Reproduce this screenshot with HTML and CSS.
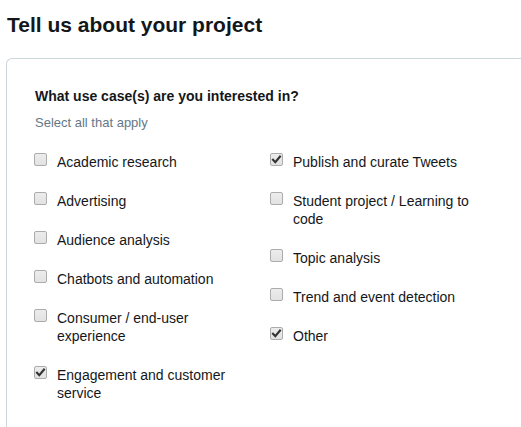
FILE: index.html
```html
<!DOCTYPE html>
<html lang="en">
<head>
<meta charset="utf-8">
<title>Tell us about your project</title>
<link rel="stylesheet" href="styles.css">
</head>
<body>
<div class="page">
  <h1 class="title">Tell us about your project</h1>
  <section class="card">
    <h2 class="question">What use case(s) are you interested in?</h2>
    <p class="hint">Select all that apply</p>
    <div class="options">
      <div class="col">
        <label class="option"><span class="box"></span><span class="text">Academic research</span></label>
        <label class="option"><span class="box"></span><span class="text">Advertising</span></label>
        <label class="option"><span class="box"></span><span class="text">Audience analysis</span></label>
        <label class="option"><span class="box"></span><span class="text">Chatbots and automation</span></label>
        <label class="option"><span class="box"></span><span class="text">Consumer / end-user experience</span></label>
        <label class="option"><span class="box checked"><svg viewBox="0 0 13 13" width="13" height="13"><path d="M3 6.8 L5.3 9.2 L10 3.6" fill="none" stroke="#333" stroke-width="2.1" stroke-linecap="square"/></svg></span><span class="text">Engagement and customer service</span></label>
      </div>
      <div class="col">
        <label class="option"><span class="box checked"><svg viewBox="0 0 13 13" width="13" height="13"><path d="M3 6.8 L5.3 9.2 L10 3.6" fill="none" stroke="#333" stroke-width="2.1" stroke-linecap="square"/></svg></span><span class="text">Publish and curate Tweets</span></label>
        <label class="option"><span class="box"></span><span class="text">Student project / Learning to code</span></label>
        <label class="option"><span class="box"></span><span class="text">Topic analysis</span></label>
        <label class="option"><span class="box"></span><span class="text">Trend and event detection</span></label>
        <label class="option"><span class="box checked"><svg viewBox="0 0 13 13" width="13" height="13"><path d="M3 6.8 L5.3 9.2 L10 3.6" fill="none" stroke="#333" stroke-width="2.1" stroke-linecap="square"/></svg></span><span class="text">Other</span></label>
      </div>
    </div>
  </section>
</div>
</body>
</html>
```
FILE: styles.css
```css
html, body {
  margin: 0;
  padding: 0;
  background: #ffffff;
  overflow: hidden;
}
body {
  font-family: "Liberation Sans", Arial, sans-serif;
  color: #14171a;
}
.page {
  padding-left: 6px;
}
.title {
  margin: 12px 0 20px 1px;
  font-size: 21px;
  line-height: 26px;
  font-weight: bold;
  color: #14171a;
}
.card {
  border: 1px solid #ccd6dd;
  border-right: none;
  border-radius: 6px 0 0 6px;
  padding: 28px 0 40px 28px;
}
.question {
  margin: 0;
  font-size: 14px;
  line-height: 18px;
  font-weight: bold;
  color: #14171a;
}
.hint {
  margin: 9px 0 21px 0;
  font-size: 13px;
  line-height: 18px;
  color: #657786;
}
.options {
  display: grid;
  grid-template-columns: 236px 236px;
}
.col {
  display: flex;
  flex-direction: column;
  gap: 21px;
}
.option {
  display: flex;
  align-items: flex-start;
  font-size: 14px;
  line-height: 18px;
  color: #14171a;
}
.box {
  flex: none;
  box-sizing: border-box;
  width: 13px;
  height: 13px;
  margin-left: -1px;
  margin-right: 10px;
  border: 1px solid #acacac;
  border-radius: 2px;
  background: linear-gradient(#ececec, #e2e2e2);
  position: relative;
}
.box svg {
  position: absolute;
  left: -1px;
  top: -1px;
}
.text {
  max-width: 190px;
}
```
